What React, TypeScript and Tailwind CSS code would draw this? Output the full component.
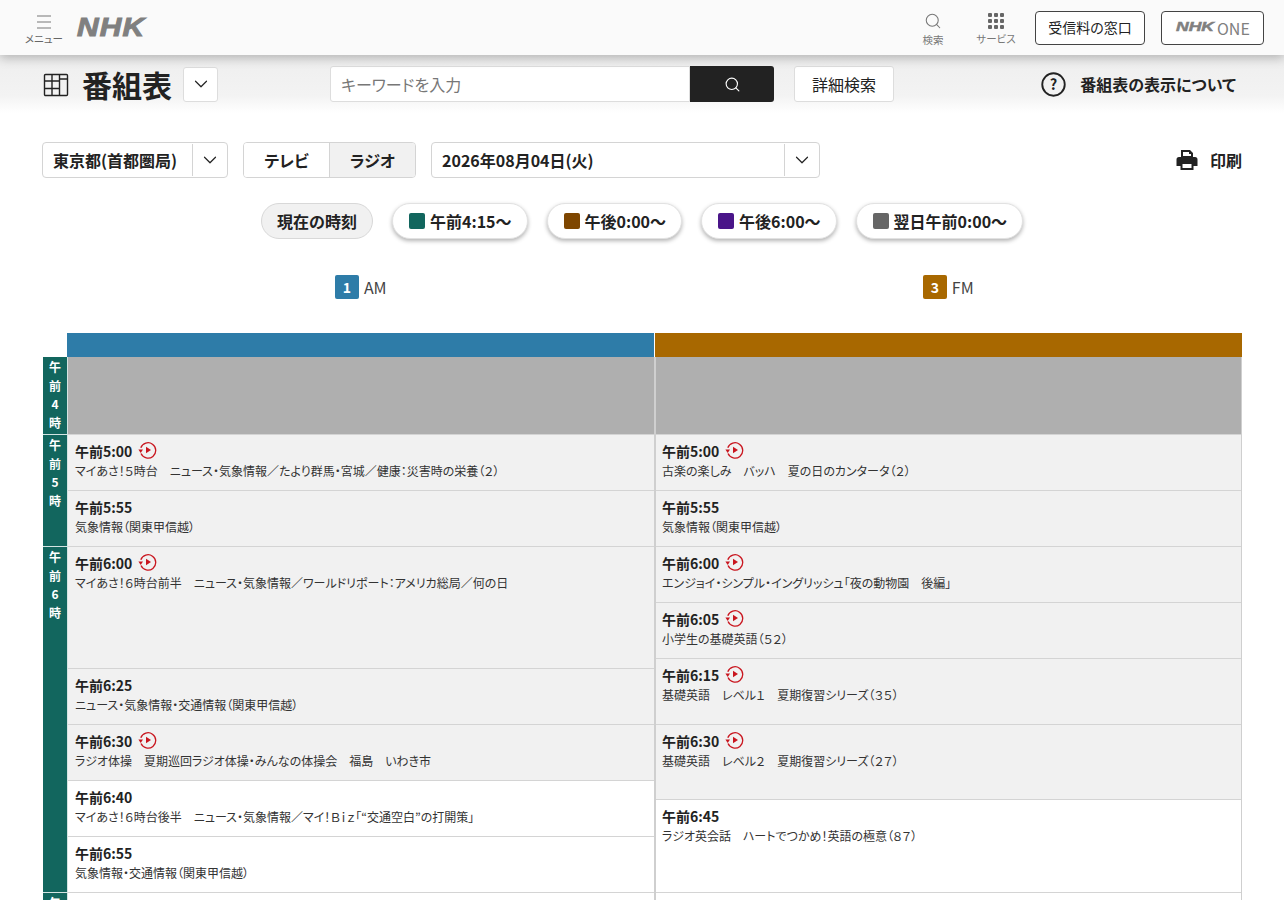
import React from 'react';
import { ChevronDown, Search } from 'lucide-react';

const font = { fontFamily: '"Noto Sans CJK JP", sans-serif' };

function Replay() {
  return (
    <svg width="19" height="18" viewBox="0 0 19 18" fill="none" className="shrink-0 -mt-[3px]">
      <path d="M2.800 6.800A7.700 7.700 0 1 1 3 12.600" stroke="#c9151e" strokeWidth="1.300" />
      <path d="M0.400 8.600h4.600L2.700 12z" fill="#c9151e" />
      <path d="M8 5.800l5 3.200-5 3.200z" fill="#c9151e" />
    </svg>
  );
}

function Program({ time, title, h, past, replay, inset }: any) {
  return (
    <div
      style={{ height: h }}
      className={`shrink-0 border-b border-[#d4d4d4] pt-[6px] ${inset ? 'px-[6.500px]' : 'px-[7px]'} ${past ? 'bg-[#f1f1f1]' : 'bg-white'}`}
    >
      <div className="flex items-center gap-[6px] h-[20px]">
        <span className="text-[14px] font-bold text-[#222] leading-[20px]">{time}</span>
        {replay && <Replay />}
      </div>
      <div className="text-[12px] text-[#333] leading-[18px] mt-[1px] whitespace-nowrap">{title}</div>
    </div>
  );
}

function HourCell({ label, h }: any) {
  return (
    <div
      style={{ height: h }}
      className="shrink-0 bg-[#12665e] border-b border-[#d4e4e2] pt-[1px] flex flex-col items-center text-white text-[12px] font-bold leading-[18.500px] overflow-hidden"
    >
      {label.map((c: string, i: number) => (
        <span key={i}>{c}</span>
      ))}
    </div>
  );
}

function Jump({ color, label }: any) {
  return (
    <div className="h-[36px] flex items-center gap-[5px] pl-[16px] pr-[15px] rounded-full bg-white border border-[#e2e2e2] shadow-[0_2px_4px_rgba(0,0,0,0.3)] text-[16px] font-bold text-[#222]">
      <span className={`w-[16px] h-[16px] rounded-[2px] ${color}`}></span>
      {label}
    </div>
  );
}

const left = [
  { time: '午前5:00', title: 'マイあさ！５時台　ニュース・気象情報／たより群馬・宮城／健康：災害時の栄養（２）', h: 56, past: true, replay: true },
  { time: '午前5:55', title: '気象情報（関東甲信越）', h: 56, past: true },
  { time: '午前6:00', title: 'マイあさ！６時台前半　ニュース・気象情報／ワールドリポート：アメリカ総局／何の日', h: 122, past: true, replay: true },
  { time: '午前6:25', title: 'ニュース・気象情報・交通情報（関東甲信越）', h: 56, past: true },
  { time: '午前6:30', title: 'ラジオ体操　夏期巡回ラジオ体操・みんなの体操会　福島　いわき市', h: 56, past: true, replay: true },
  { time: '午前6:40', title: 'マイあさ！６時台後半　ニュース・気象情報／マイ！Ｂｉｚ「“交通空白”の打開策」', h: 56 },
  { time: '午前6:55', title: '気象情報・交通情報（関東甲信越）', h: 56 },
];

const right = [
  { time: '午前5:00', title: '古楽の楽しみ　バッハ　夏の日のカンタータ（２）', h: 56, past: true, replay: true },
  { time: '午前5:55', title: '気象情報（関東甲信越）', h: 56, past: true },
  { time: '午前6:00', title: 'エンジョイ・シンプル・イングリッシュ「夜の動物園　後編」', h: 56, past: true, replay: true },
  { time: '午前6:05', title: '小学生の基礎英語（５２）', h: 56, past: true, replay: true },
  { time: '午前6:15', title: '基礎英語　レベル１　夏期復習シリーズ（３５）', h: 66, past: true, replay: true },
  { time: '午前6:30', title: '基礎英語　レベル２　夏期復習シリーズ（２７）', h: 75, past: true, replay: true },
  { time: '午前6:45', title: 'ラジオ英会話　ハートでつかめ！英語の極意（８７）', h: 93 },
];

export default function App() {
  return (
    <div style={font} className="relative h-[900px] overflow-hidden bg-white [font-feature-settings:'palt']">
      {/* Header */}
      <div className="relative z-10 h-[55px] bg-[#fafafa] shadow-[0_3px_10px_rgba(0,0,0,0.25)] flex items-center pl-[24px] pr-[20px]">
        <div className="w-[40px] flex flex-col items-center text-[#666]">
          <svg width="16" height="16" viewBox="0 0 16 16" className="mt-[4px]" stroke="#777" strokeWidth="1.200">
            <path d="M1 2h14M1 8h14M1 14h14" />
          </svg>
          <span className="text-[10.500px] leading-[14px] mt-[2px] whitespace-nowrap">メニュー</span>
        </div>
        <span className="ml-[13px] origin-left scale-x-[1.150] text-[26px] leading-none font-black italic text-[#808080] tracking-[1px] [-webkit-text-stroke:1px_#808080] [font-family:'Liberation_Sans',sans-serif] -mt-[2px]">NHK</span>
        <div className="flex-1"></div>
        <div className="w-[40px] flex flex-col items-center text-[#777] mr-[23px]">
          <Search size={18} strokeWidth={1.400} className="mt-[3px]" />
          <span className="text-[10.500px] leading-[14px] mt-[3px]">検索</span>
        </div>
        <div className="w-[40px] flex flex-col items-center text-[#777] mr-[19px]">
          <svg width="16" height="16" viewBox="0 0 16 16" fill="#666" className="mt-[4px]">
            <rect x="0" y="0" width="4" height="4" rx="1" /><rect x="6" y="0" width="4" height="4" rx="1" /><rect x="12" y="0" width="4" height="4" rx="1" />
            <rect x="0" y="6" width="4" height="4" rx="1" /><rect x="6" y="6" width="4" height="4" rx="1" /><rect x="12" y="6" width="4" height="4" rx="1" />
            <rect x="0" y="12" width="4" height="4" rx="1" /><rect x="6" y="12" width="4" height="4" rx="1" /><rect x="12" y="12" width="4" height="4" rx="1" />
          </svg>
          <span className="text-[10.500px] leading-[14px] mt-[3px] whitespace-nowrap">サービス</span>
        </div>
        <div className="w-[110px] h-[34px] rounded-[4px] border border-[#444] bg-white flex items-center justify-center text-[14px] text-[#222]">受信料の窓口</div>
        <div className="ml-[16px] w-[103px] h-[34px] rounded-[4px] border border-[#444] bg-white flex items-center pl-[14px] text-[16px] text-[#808080]">
          <span className="origin-left scale-x-[1.300] w-[39px] text-[13.500px] font-black italic [-webkit-text-stroke:0.500px_#808080] [font-family:'Liberation_Sans',sans-serif]">NHK</span>
          <span className="ml-[2px]">ONE</span>
        </div>
      </div>

      {/* Title bar */}
      <div className="h-[58px] bg-gradient-to-b from-[#eeeeee] via-[#f3f3f3] via-70% to-white flex items-center pl-[43px] pr-[48px]">
        <svg width="26" height="24" viewBox="0 0 26 24" fill="none" stroke="#222" strokeWidth="1.400" className="mt-[2px]">
          <rect x="1.500" y="1.500" width="23" height="21" rx="1" />
          <path d="M9 1.500v21M16.500 1.500v21M1.500 8h15M1.500 15.500h15M16.500 6h8" />
        </svg>
        <h1 className="ml-[13px] text-[30px] font-bold text-[#222] leading-none">番組表</h1>
        <div className="ml-[11px] w-[35px] h-[35px] rounded-[3px] bg-white border border-[#ddd] flex items-center justify-center">
          <ChevronDown size={22} strokeWidth={1.300} color="#222" />
        </div>
        <div className="ml-[112px] flex h-[36px] w-[444px]">
          <div className="w-[360px] bg-white border border-[#ddd] rounded-l-[3px] px-[10px] text-[16px] text-[#777] flex items-center">キーワードを入力</div>
          <div className="flex-1 bg-[#222] rounded-r-[3px] flex items-center justify-center">
            <Search size={17} strokeWidth={1.600} color="#fff" />
          </div>
        </div>
        <div className="ml-[20px] w-[100px] h-[36px] rounded-[3px] bg-white border border-[#ddd] flex items-center justify-center text-[16px] text-[#222]">詳細検索</div>
        <div className="flex-1"></div>
        <svg width="25" height="25" viewBox="0 0 24 24" fill="none" stroke="#222" strokeWidth="1.800">
          <circle cx="12" cy="12" r="10.800" />
          <text x="12" y="17" textAnchor="middle" fontSize="14" fontWeight="700" fill="#222" stroke="none">?</text>
        </svg>
        <span className="ml-[14px] text-[16px] font-bold text-[#222]">番組表の表示について</span>
      </div>

      {/* Filters */}
      <div className="mt-[29px] flex items-center pl-[42px] pr-[42px] h-[36px]">
        <div className="flex w-[186px] h-[36px] rounded-[4px] border border-[#d4d4d4] bg-white">
          <div className="flex-1 flex items-center pl-[10px] text-[16px] font-bold text-[#222] whitespace-nowrap">東京都(首都圏局)</div>
          <div className="w-[35px] my-[1px] border-l border-[#d4d4d4] flex items-center justify-center">
            <ChevronDown size={22} strokeWidth={1.300} color="#222" />
          </div>
        </div>
        <div className="ml-[15px] flex w-[173px] h-[36px] rounded-[4px] border border-[#d4d4d4] overflow-hidden text-[16px] font-bold text-[#222]">
          <div className="w-[85px] flex items-center justify-center bg-white">テレビ</div>
          <div className="flex-1 flex items-center justify-center bg-[#f1f1f1] border-l border-[#d4d4d4]">ラジオ</div>
        </div>
        <div className="ml-[15px] flex w-[389px] h-[36px] rounded-[4px] border border-[#d4d4d4] bg-white">
          <div className="flex-1 flex items-center pl-[10px] text-[16px] font-bold text-[#222]">2026年08月04日(火)</div>
          <div className="w-[35px] my-[1px] border-l border-[#d4d4d4] flex items-center justify-center">
            <ChevronDown size={22} strokeWidth={1.300} color="#222" />
          </div>
        </div>
        <div className="flex-1"></div>
        <svg width="22" height="22" viewBox="0 0 22 22" fill="#222">
          <path d="M5 1h9l3 3v4H5z M7 3v4h8V5h-2V3z" fillRule="evenodd" />
          <path d="M3 8h16a2.500 2.500 0 0 1 2.500 2.500V17H17.500v4h-13v-4H.5v-6.500A2.500 2.500 0 0 1 3 8z M6.500 15v4h9v-4z" fillRule="evenodd" />
        </svg>
        <span className="ml-[12px] text-[16px] font-bold text-[#222]">印刷</span>
      </div>

      {/* Time jump */}
      <div className="mt-[25px] h-[36px] flex items-center pl-[261px] gap-[19px]">
        <div className="h-[36px] w-[112px] rounded-full bg-[#f1f1f1] border border-[#d8d8d8] flex items-center justify-center text-[16px] font-bold text-[#222]">現在の時刻</div>
        <Jump color="bg-[#12665e]" label="午前4:15〜" />
        <Jump color="bg-[#7e4600]" label="午後0:00〜" />
        <Jump color="bg-[#4a1589]" label="午後6:00〜" />
        <Jump color="bg-[#666666]" label="翌日午前0:00〜" />
      </div>

      {/* Channel names */}
      <div className="mt-[36px] h-[24px] flex pl-[67px] pr-[42px]">
        <div className="flex-1 flex items-center justify-center gap-[5px] text-[16px] text-[#444]">
          <span className="w-[24px] h-[24px] rounded-[2px] bg-[#2e7ca8] text-white font-bold text-[14px] flex items-center justify-center">1</span>
          AM
        </div>
        <div className="flex-1 flex items-center justify-center gap-[5px] text-[16px] text-[#444]">
          <span className="w-[24px] h-[24px] rounded-[2px] bg-[#a86800] text-white font-bold text-[14px] flex items-center justify-center">3</span>
          FM
        </div>
      </div>

      {/* Schedule */}
      <div className="mt-[34px] pl-[43px] pr-[42px]">
        <div className="flex pl-[24px] h-[24px]">
          <div className="flex-1 bg-[#2e7ca8]"></div>
          <div className="w-[1px] bg-white"></div>
          <div className="flex-1 bg-[#a86800]"></div>
        </div>
        <div className="flex">
          <div className="w-[24px] shrink-0 flex flex-col">
            <HourCell label={['午', '前', '4', '時']} h={78} />
            <HourCell label={['午', '前', '5', '時']} h={112} />
            <HourCell label={['午', '前', '6', '時']} h={346} />
            <HourCell label={['午', '前', '7', '時']} h={60} />
          </div>
          <div className="flex-1 flex flex-col border-l border-[#d4e4e2] border-r border-r-[#cfcfcf]">
            <div className="h-[78px] shrink-0 bg-[#afafaf] border-b border-[#d4d4d4]"></div>
            {left.map((p) => (
              <Program key={p.time} {...p} />
            ))}
          </div>
          <div className="flex-1 flex flex-col border-l border-[#cfcfcf] border-r border-r-[#cfcfcf]">
            <div className="h-[78px] shrink-0 bg-[#afafaf] border-b border-[#d4d4d4]"></div>
            {right.map((p) => (
              <Program key={p.time} inset {...p} />
            ))}
          </div>
        </div>
      </div>
    </div>
  );
}
